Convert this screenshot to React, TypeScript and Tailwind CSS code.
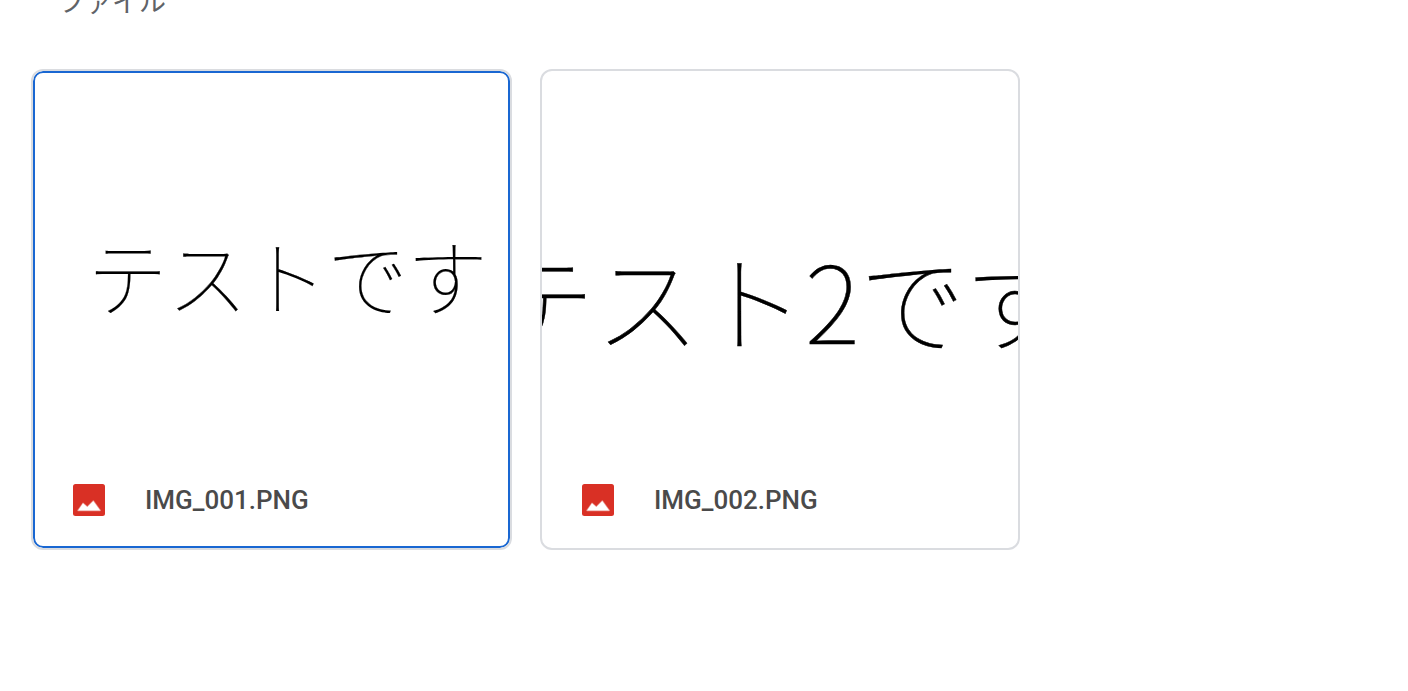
import React, { useState } from 'react';

const files = [
  {
    name: 'IMG_001.PNG',
    preview: 'テストです',
    cardClass: 'w-[481px]',
    previewClass: 'left-[54.5px] top-[143px] text-[80px] leading-[120px] scale-y-[1.03] [-webkit-text-stroke:0.2px_#000]',
  },
  {
    name: 'IMG_002.PNG',
    preview: 'テスト2です',
    cardClass: 'w-[480px]',
    previewClass: 'left-[-52px] top-[151px] text-[105px] leading-[150px] scale-y-[1.02] [-webkit-text-stroke:0.4px_#000]',
  },
];

function App() {
  const [selected, setSelected] = useState('IMG_001.PNG');

  return (
    <div className="h-[691px] w-full overflow-hidden bg-white font-['Roboto','Noto_Sans_CJK_JP',sans-serif]">
      <h2 className="-mt-4 h-[38px] pl-[58px] text-[27px] leading-[38px] font-normal text-[#5f6368]">
        ファイル
      </h2>

      {/* File grid */}
      <div className="mt-[47px] flex gap-7 pl-[31px]">
        {files.map((file) => (
          <FileCard
            key={file.name}
            name={file.name}
            preview={file.preview}
            cardClass={file.cardClass}
            previewClass={file.previewClass}
            selected={selected === file.name}
            onSelect={() => setSelected(file.name)}
          />
        ))}
      </div>
    </div>
  );
}

type FileCardProps = {
  name: string;
  preview: string;
  cardClass: string;
  previewClass: string;
  selected: boolean;
  onSelect: () => void;
};

function FileCard({ name, preview, cardClass, previewClass, selected, onSelect }: FileCardProps) {
  return (
    <div
      onClick={onSelect}
      className={`relative flex h-[481px] shrink-0 cursor-pointer flex-col overflow-hidden rounded-[12px] border-2 border-[#dadce0] bg-white ${cardClass}`}
    >
      <div className="relative flex-1">
        <span
          className={`absolute whitespace-nowrap font-['Noto_Sans_CJK_JP',sans-serif] font-thin text-black ${previewClass}`}
        >
          {preview}
        </span>
      </div>
      <div className="flex h-24 items-center gap-10 pl-10">
        <ImageIcon />
        <span className="text-[26px] font-medium text-[#4a4a4a]">{name}</span>
      </div>
      {selected && <div className="absolute inset-0 rounded-[10px] border-2 border-[#1967d2]" />}
    </div>
  );
}

// Red picture file icon
function ImageIcon() {
  return (
    <svg width="32" height="32" viewBox="0 0 32 32" className="shrink-0">
      <rect width="32" height="32" rx="2.5" fill="#d93025" />
      <path
        d="M5 26.5L10 19.3l4.3 3.7L20.3 17l6.9 9.5z"
        fill="#fff"
        stroke="#fff"
        strokeOpacity="0.45"
        strokeWidth="1.4"
        strokeLinejoin="round"
      />
    </svg>
  );
}

export default App;
